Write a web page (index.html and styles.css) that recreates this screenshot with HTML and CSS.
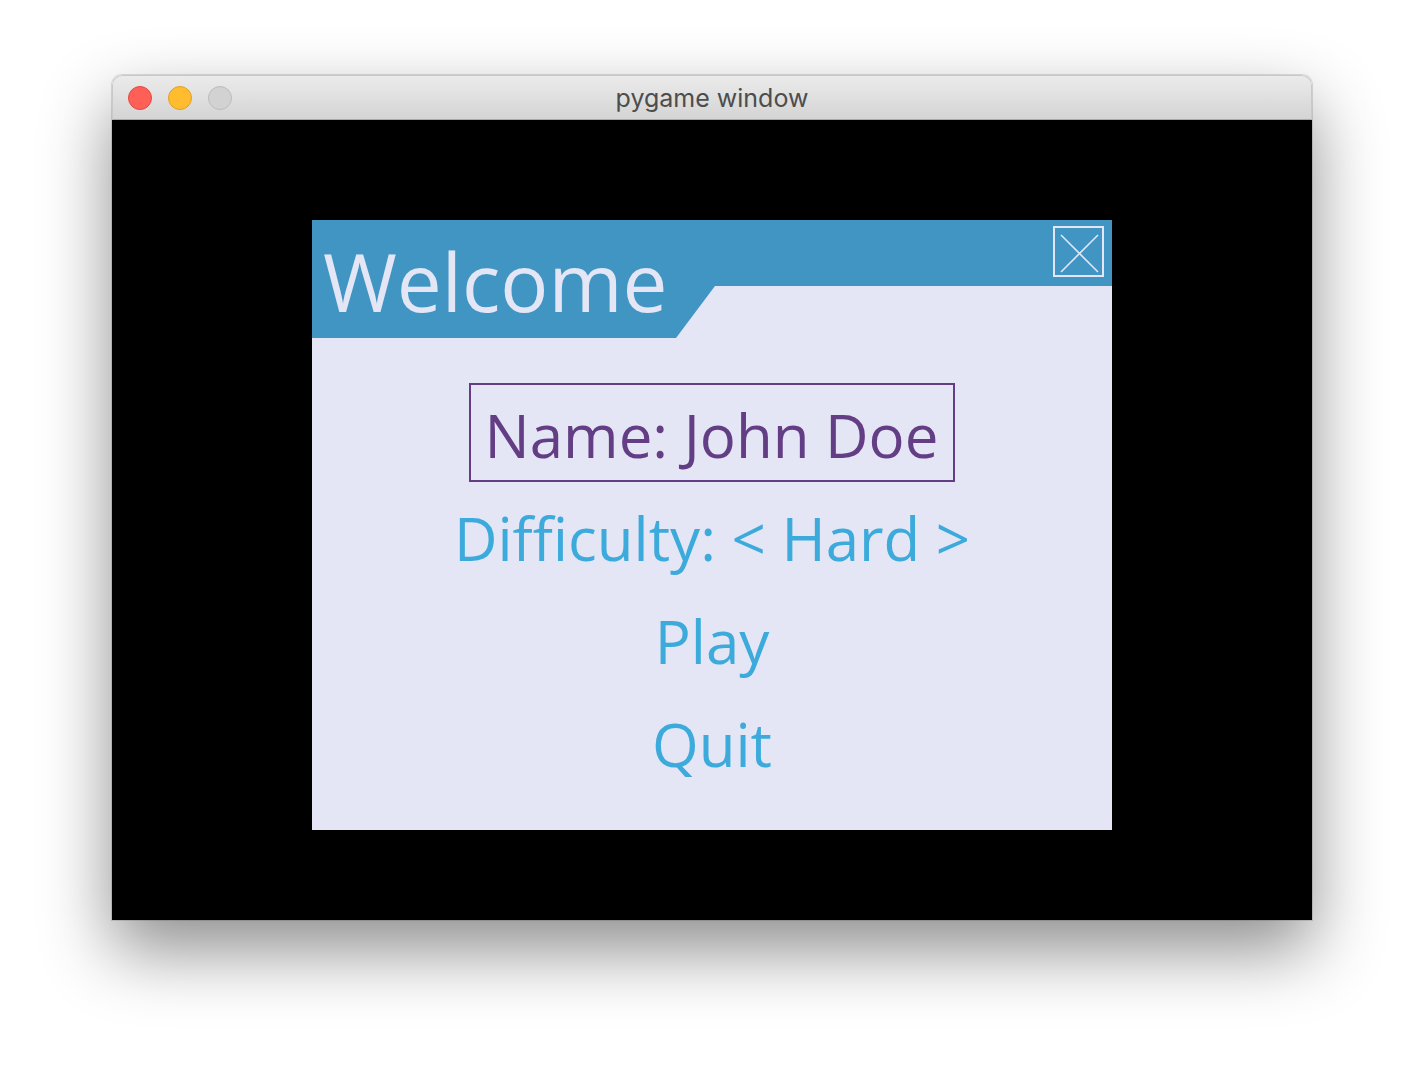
FILE: index.html
```html
<!DOCTYPE html>
<html>
<head>
<meta charset="utf-8">
<link rel="stylesheet" href="styles.css">
</head>
<body>
<div class="page">
  <div class="window">
    <div class="titlebar">
      <div class="lights">
        <span class="light red"></span>
        <span class="light yellow"></span>
        <span class="light gray"></span>
      </div>
      <div class="wtitle">pygame window</div>
    </div>
    <div class="screen">
      <div class="menu">
        <div class="header">
          <div class="title">Welcome</div>
          <div class="band">
            <div class="close">
              <svg width="51" height="51" viewBox="0 0 51 51">
                <rect x="1" y="1" width="49" height="49" fill="none" stroke="#e4e6f6" stroke-width="2"/>
                <line x1="8" y1="9" x2="45" y2="46" stroke="#e4e6f6" stroke-width="1.6"/>
                <line x1="45" y1="9" x2="8" y2="46" stroke="#e4e6f6" stroke-width="1.6"/>
              </svg>
            </div>
          </div>
        </div>
        <div class="items">
          <div class="item name">Name: John Doe</div>
          <div class="item diff">Difficulty: &lt; Hard &gt;</div>
          <div class="item play">Play</div>
          <div class="item quit">Quit</div>
        </div>
      </div>
    </div>
  </div>
</div>
</body>
</html>
```

FILE: styles.css
```css
html, body {
  margin: 0;
  padding: 0;
  background: #ffffff;
}
.page {
  width: 1424px;
  height: 1068px;
  padding: 75px 0 0 112px;
  box-sizing: border-box;
}
.window {
  width: 1200px;
  border-radius: 10px 10px 0 0;
  box-shadow: 0 30px 70px rgba(0, 0, 0, 0.45), 0 0 0 1px rgba(0, 0, 0, 0.12);
  overflow: hidden;
}
.titlebar {
  height: 43px;
  background: linear-gradient(#ebebeb, #d4d4d4);
  border: 1px solid #c9c9c9;
  border-bottom: 1px solid #a9a9a9;
  border-radius: 10px 10px 0 0;
  display: flex;
  align-items: center;
  position: relative;
}
.lights {
  display: flex;
  gap: 16px;
  padding-left: 15px;
}
.light {
  width: 24px;
  height: 24px;
  border-radius: 50%;
  box-sizing: border-box;
}
.red { background: #fe5f57; border: 1px solid #e14a41; }
.yellow { background: #febc2e; border: 1px solid #e0a123; }
.gray { background: #d2d2d2; border: 1px solid #bcbcbc; }
.wtitle {
  position: absolute;
  left: 0;
  right: 0;
  top: 0;
  bottom: 0;
  display: flex;
  justify-content: center;
  align-items: center;
  font-family: Inter, "Liberation Sans", sans-serif;
  font-size: 25px;
  color: #4d4d4d;
  padding-top: 1px;
}
.screen {
  height: 800px;
  background: #000000;
  padding: 100px 200px 0 200px;
  box-sizing: border-box;
}
.menu {
  width: 800px;
  height: 610px;
  background: #e4e6f6;
  font-family: "Open Sans", sans-serif;
}
.header {
  display: flex;
  align-items: flex-start;
}
.title {
  width: 403px;
  height: 118px;
  box-sizing: border-box;
  background: #4195c3;
  clip-path: polygon(0 0, 100% 0, 100% 66px, 364px 118px, 0 118px);
  color: #e4e6f6;
  font-size: 80px;
  line-height: 80px;
  padding: 21px 0 0 11px;
}
.band {
  flex: 1;
  height: 66px;
  background: #4195c3;
  display: flex;
  justify-content: flex-end;
  align-items: flex-start;
}
.close {
  width: 51px;
  height: 51px;
  margin: 6px 8px 0 0;
}
.close svg { display: block; }
.items {
  display: flex;
  flex-direction: column;
  align-items: center;
  padding-top: 45px;
}
.item {
  font-size: 60px;
  line-height: 60px;
  color: #3daadc;
  white-space: nowrap;
}
.name {
  color: #643e84;
  border: 2px solid #643e84;
  padding: 20px 15px 15px 14px;
}
.diff { margin-top: 26px; }
.play { margin-top: 43px; }
.quit { margin-top: 43px; }
```
